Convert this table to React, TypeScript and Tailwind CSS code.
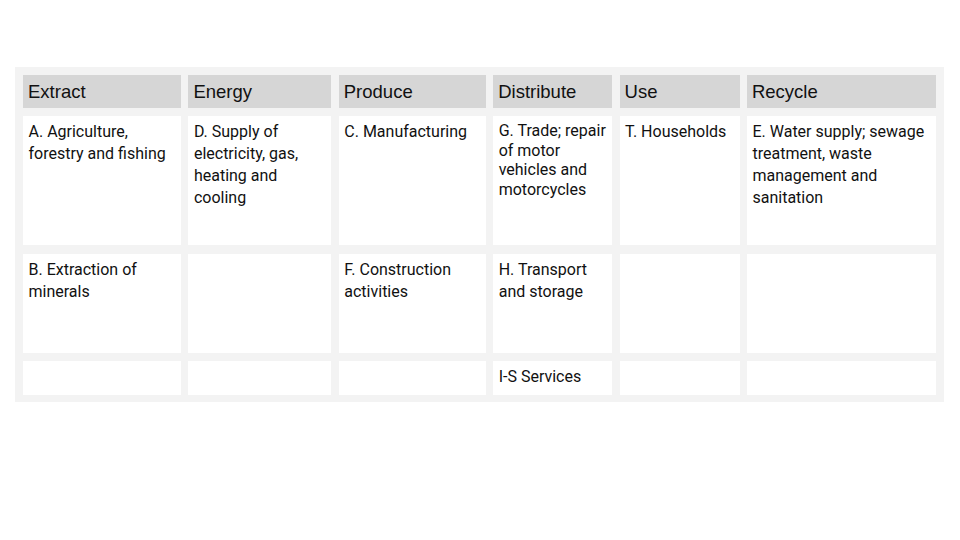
import React from "react";

const headers = ["Extract", "Energy", "Produce", "Distribute", "Use", "Recycle"];

type Cell = { text?: string; tight?: boolean };

const rows: { h: string; cells: Cell[] }[] = [
  {
    h: "h-[129px]",
    cells: [
      { text: "A. Agriculture, forestry and fishing" },
      { text: "D. Supply of electricity, gas, heating and cooling" },
      { text: "C. Manufacturing" },
      { text: "G. Trade; repair of motor vehicles and motorcycles", tight: true },
      { text: "T. Households" },
      { text: "E. Water supply; sewage treatment, waste management and sanitation" },
    ],
  },
  {
    h: "h-[99px]",
    cells: [
      { text: "B. Extraction of minerals" },
      {},
      { text: "F. Construction activities" },
      { text: "H. Transport and storage" },
      {},
      {},
    ],
  },
  {
    h: "h-[34px]",
    cells: [{}, {}, {}, { text: "I-S Services" }, {}, {}],
  },
];

export default function App() {
  return (
    <div
      className="w-[960px] h-[540px] bg-white relative overflow-hidden text-[#111]"
      style={{ fontFamily: "Roboto, 'Liberation Sans', sans-serif" }}
    >
      <div className="pt-[67px] pl-[15px]">
        <div className="w-[929px] bg-[#f3f3f3] p-[8px] pb-[7px]">
          <div className="grid grid-cols-[158px_143px_147px_119px_120px_189px] gap-x-[7.4px] gap-y-[8.4px]">
            {headers.map((h) => (
              <div
                key={h}
                className="h-[33px] bg-[#d6d6d6] flex items-center px-[5px] pt-[2px] text-[18.5px] leading-none"
                style={{ fontFamily: "'Liberation Sans', Arial, sans-serif" }}
              >
                {h}
              </div>
            ))}
            {rows.map((r, ri) =>
              r.cells.map((c, ci) => (
                <div
                  key={`${ri}-${ci}`}
                  className={`${r.h} bg-white pl-[5.5px] pr-[4px] pt-[5px] text-[16px] ${
                    c.tight ? "leading-[19.5px] text-[15.5px]" : "leading-[22px]"
                  }`}
                >
                  {c.text}
                </div>
              ))
            )}
          </div>
        </div>
      </div>
    </div>
  );
}
